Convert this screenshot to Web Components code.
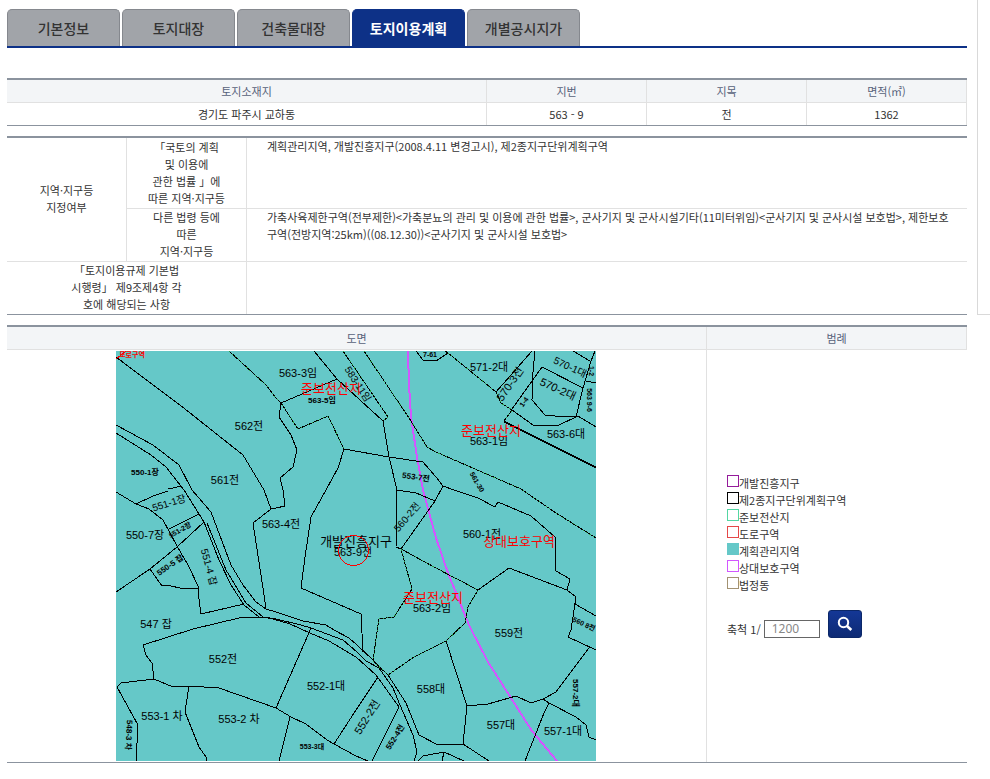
<!DOCTYPE html>
<html lang="ko">
<head>
<meta charset="utf-8">
<title>토지이용계획</title>
<style>
  body {
    margin: 0;
    background: #fff;
    color: #333;
    font: 11px/17px "Noto Sans CJK KR", sans-serif;
  }
</style>
</head>
<body>
<land-page>
  <tab-bar slot="tabs">
    <tab-link href="#basic">기본정보</tab-link>
    <tab-link href="#land">토지대장</tab-link>
    <tab-link href="#building">건축물대장</tab-link>
    <tab-link href="#plan" active>토지이용계획</tab-link>
    <tab-link href="#price">개별공시지가</tab-link>
  </tab-bar>
  <land-summary></land-summary>
  <land-plan></land-plan>
  <map-sheet>
    <cadastral-map slot="map"></cadastral-map>
    <legend-item style="--line:#951b9b">개발진흥지구</legend-item>
    <legend-item style="--line:#000">제2종지구단위계획구역</legend-item>
    <legend-item style="--line:#53d6a3">준보전산지</legend-item>
    <legend-item style="--line:#e54848">도로구역</legend-item>
    <legend-item style="--line:#65c8c8; --fill:#65c8c8">계획관리지역</legend-item>
    <legend-item style="--line:#d257ff">상대보호구역</legend-item>
    <legend-item style="--line:#a39272">법정동</legend-item>
    <scale-form slot="scale"></scale-form>
  </map-sheet>
</land-page>

<script>
const tableCss = `
  :host { display: block; }
  table {
    width: 100%;
    table-layout: fixed;
    border-collapse: separate;
    border-spacing: 0;
    border-top: 2px solid #8b939e;
    border-bottom: 1px solid #8b939e;
  }
  th, td {
    padding: 0;
    font-weight: 400;
    text-align: center;
    vertical-align: middle;
    border-right: 1px solid #e1e1e1;
    border-bottom: 1px solid #e1e1e1;
  }
  thead th {
    box-sizing: border-box;
    height: 23px;
    background: #f3f5f7;
    color: #57627a;
  }
  tbody tr:last-child > * { border-bottom: 0; }
`;

function define(name, html, setup) {
  const template = document.createElement('template');
  template.innerHTML = html;
  customElements.define(name, class extends HTMLElement {
    constructor() {
      super();
      this.attachShadow({ mode: 'open' }).append(template.content.cloneNode(true));
    }
    connectedCallback() {
      if (setup) setup(this, this.shadowRoot);
    }
  });
}

define('land-page', `
  <style>
    :host {
      display: grid;
      grid-template-columns: minmax(0, 1fr) 13px;
      gap: 10px;
      padding-left: 7px;
    }
    main { padding: 9px 0 16px; }
    .body { display: flex; flex-direction: column; gap: 10px; margin-top: 30px; }
    aside {
      box-sizing: border-box;
      height: 315px;
      border: solid #d9d9d9;
      border-width: 0 0 1px 1px;
    }
  </style>
  <main>
    <slot name="tabs"></slot>
    <div class="body"><slot></slot></div>
  </main>
  <aside></aside>
`);

define('tab-bar', `
  <style>
    :host { display: block; border-bottom: 2px solid #0d3187; }
    nav { display: flex; gap: 2px; }
  </style>
  <nav><slot></slot></nav>
`);

define('tab-link', `
  <style>
    :host { display: block; width: 113px; }
    a {
      display: block;
      box-sizing: border-box;
      height: 37px;
      border: 1px solid #85888e;
      border-bottom: 0;
      border-radius: 5px 5px 0 0;
      background: #a1a4a9;
      color: #333;
      font-size: 14px;
      font-weight: 500;
      line-height: 36px;
      text-align: center;
      text-decoration: none;
      white-space: nowrap;
    }
    :host([active]) a { background: #0d3187; border-color: #0d3187; color: #fff; font-weight: 700; }
  </style>
  <a><slot></slot></a>
`, (host, root) => root.querySelector('a').setAttribute('href', host.getAttribute('href')));

define('land-summary', `
  <style>${tableCss}
    col.narrow { width: 160px; }
    td { height: 22px; }
  </style>
  <table>
    <colgroup><col><col class="narrow"><col class="narrow"><col class="narrow"></colgroup>
    <thead><tr><th scope="col">토지소재지</th><th scope="col">지번</th><th scope="col">지목</th><th scope="col">면적(㎡)</th></tr></thead>
    <tbody><tr><td>경기도 파주시 교하동</td><td>563 - 9</td><td>전</td><td>1362</td></tr></tbody>
  </table>
`);

define('land-plan', `
  <style>${tableCss}
    col.head { width: 120px; }
    th { padding-bottom: 1px; }
    td { padding-left: 20px; text-align: left; vertical-align: top; border-right: 0; }
    .tall { height: 69px; }
  </style>
  <table>
    <colgroup><col class="head"><col class="head"><col></colgroup>
    <tbody>
      <tr>
        <th scope="rowgroup" rowspan="2">지역·지구등<br>지정여부</th>
        <th scope="row" class="tall">「국토의 계획<br>및 이용에<br>관한 법률 」에<br>따른 지역·지구등</th>
        <td>계획관리지역, 개발진흥지구(2008.4.11 변경고시), 제2종지구단위계획구역</td>
      </tr>
      <tr>
        <th scope="row">다른 법령 등에<br>따른<br>지역·지구등</th>
        <td>가축사육제한구역(전부제한)&lt;가축분뇨의 관리 및 이용에 관한 법률&gt;, 군사기지 및 군사시설기타(11미터위임)&lt;군사기지 및 군사시설 보호법&gt;, 제한보호<br>구역(전방지역:25km)((08.12.30))&lt;군사기지 및 군사시설 보호법&gt;</td>
      </tr>
      <tr>
        <th scope="row" colspan="2">「토지이용규제 기본법<br>시행령」 제9조제4항 각<br>호에 해당되는 사항</th>
        <td></td>
      </tr>
    </tbody>
  </table>
`);

define('map-sheet', `
  <style>${tableCss}
    col.side { width: 260px; }
    tbody td { padding: 1px 0; border-right: 0; }
    tbody td.map { padding-right: 1px; border-right: 1px solid #e1e1e1; }
    tbody td.side { padding-left: 20px; text-align: left; }
    .items { display: flex; flex-direction: column; margin-bottom: 16px; }
  </style>
  <table>
    <colgroup><col><col class="side"></colgroup>
    <thead><tr><th scope="col">도면</th><th scope="col">범례</th></tr></thead>
    <tbody><tr>
      <td class="map"><slot name="map"></slot></td>
      <td class="side"><div class="items"><slot></slot></div><slot name="scale"></slot></td>
    </tr></tbody>
  </table>
`);

define('legend-item', `
  <style>
    :host { display: flex; align-items: flex-start; height: 17px; line-height: 17px; }
    i {
      box-sizing: border-box;
      width: 12px;
      height: 12px;
      border: 1px solid var(--line);
      background: var(--fill, transparent);
    }
  </style>
  <i></i><span><slot></slot></span>
`);

define('scale-form', `
  <style>
    :host { display: block; }
    form { display: flex; align-items: flex-end; }
    label { margin-right: 3px; line-height: 17px; }
    input {
      box-sizing: border-box;
      width: 56px;
      height: 18px;
      padding: 0 7px;
      border: 1px solid #666;
      border-radius: 0;
      background: #fff;
      color: #888;
      font: 12px/16px "Noto Sans", sans-serif;
    }
    button {
      display: flex;
      align-items: center;
      justify-content: center;
      width: 34px;
      height: 28px;
      margin-left: 8px;
      padding: 0;
      border: 1px solid #0b2768;
      border-radius: 3px;
      background: linear-gradient(#143796, #0d2a74);
    }
  </style>
  <form>
    <label for="scale">축척 1/</label>
    <input id="scale" type="text" value="1200">
    <button type="button" aria-label="검색">
      <svg width="16" height="16" viewBox="0 0 16 16" fill="none" stroke="#fff">
        <circle cx="6.5" cy="6.5" r="4.7" stroke-width="2"/>
        <path d="M10 10l4.3 4" stroke-width="2.6"/>
      </svg>
    </button>
  </form>
`);

/* Parcel outlines, in sheet coordinates. */
const parcels = [
  '116,357 120,360 180,405 243,455 255,475 264,490 271,509 276,508 285,506 283,490 280,478 293,467 297,450 291,435 279,417 281,403',
  '271,509 253,523 266,608',
  '116,425 153,445 179,465 192,490 211,512 231,565 243,585 256,602 266,609 276,612 303,621 326,625 334,630 349,638 357,645 373,660 388,675 406,703 419,735 438,745 463,744 489,761',
  '116,433 151,455 166,467 184,490 204,522 219,560 231,585 244,605 259,617 276,619 301,625 311,628 343,640 357,652 366,661 379,668 393,688 400,705 413,735 417,752 414,761',
  '207,523 226,570 246,603 263,617',
  '266,617 290,624 310,633 329,641 356,657 376,675 399,707',
  '168,489 182,486',
  '116,492 136,504 149,509 163,520 177,546 188,565 199,588 198,592 201,614 244,604',
  '136,504 153,496 168,491',
  '169,529 199,514',
  '116,592 150,569 177,547 204,522',
  '150,569 162,586 167,585 184,589 199,588',
  '266,617 239,618 193,629 143,645 146,655 152,663 154,679 121,683 117,687 138,725 136,761',
  '154,679 173,687 189,686 219,688 276,708 291,717 306,724 327,740 334,744 356,756 368,761',
  '189,686 185,712 199,747 206,757 206,761',
  '290,717 279,761',
  '311,628 276,708',
  '334,744 356,710 378,677',
  '372,761 399,707',
  '363,652 361,614 301,588 305,557 311,517 326,490 338,468 344,449',
  '396,547 397,490 389,457 383,421 337,379 314,351',
  '397,490 416,493 435,501 401,549',
  '396,547 401,549',
  '344,449 389,457 423,462 436,477 443,486 454,490 478,498 495,507 498,502 531,516 555,537 556,571 570,579 567,590',
  '443,486 435,501',
  '281,403 337,379',
  '416,351 423,360 436,361 448,353 445,351',
  '496,392 532,351',
  '535,351 533,372 532,400 545,415 564,417 578,416',
  '501,403 512,410 533,425 559,425 578,416 596,427',
  '504,421 596,467',
  '504,422 596,468',
  '512,409 542,367 583,388',
  '573,351 590,361',
  '595,351 591,361 583,388 576,417',
  '586,381 596,383',
  '478,590 509,568 567,590 576,597 571,630 568,637 596,650',
  '575,604 596,616',
  '446,641 467,706 463,744',
  '467,706 488,704 516,696 531,703 543,699 556,692 589,648',
  '543,699 549,703 576,717 586,725 589,737 596,740',
  '549,703 544,713 525,761',
  '418,761 423,756 444,752 464,761',
  '444,752 442,761'
];
const forestEdges = [
  '229,351 266,385 276,398 281,403 298,429 328,416 344,449',
  '343,351 388,417 383,421',
  '364,351 409,418 427,447 436,452 521,489 556,513 596,538',
  '448,353 496,392 501,403 512,410 504,421',
  '401,549 436,568 478,590 468,607 465,623 446,641 414,657 388,675 373,661 378,625 379,619 394,617 412,589 401,549'
];
/* [centre x, centre y, text, class, rotation] */
const labels = [
  [298,373,'563-3임'], [322,400,'563-5임','s'], [358,384,'583-11임','m',57],
  [249,426,'562전'], [225,480,'561전'], [145,472,'550-1장','s'], [416,477,'553-7전','s',8],
  [489,367,'571-2대'], [510,384,'570-3전','',-55], [570,367,'570-1대','m',25],
  [558,389,'570-2대','',25], [524,402,'1-4','t',-55], [589,400,'563 9-6','t',90],
  [591,371,'1-2','t',90], [430,355,'7-61','t'],
  [489,441,'563-1임'], [566,434,'563-6대'], [477,482,'561-30','t',60],
  [169,503,'551-1장','m',-17], [145,535,'550-7장'], [180,530,'551-2장','t',-30],
  [170,565,'550-5 잡','s',-35], [209,567,'551-4 잡','m',75], [156,624,'547 잡'],
  [281,524,'563-4전'], [353,552,'563-9전'], [407,517,'560-2전','m',-50],
  [432,608,'563-2임'], [482,534,'560-1전'], [584,624,'560 8전','t',25],
  [509,633,'559전'], [223,659,'552전'], [326,686,'552-1대'], [162,716,'553-1 차'],
  [239,719,'553-2 차'], [312,747,'553-3대','t'], [129,735,'548-3 차','s',93],
  [431,689,'558대'], [501,725,'557대'], [563,731,'557-1대'], [576,693,'557-2대','s',90],
  [367,717,'552-2전','',-58], [395,737,'552-4전','s',-58],
  [356,541,'개발진흥지구','zone'], [331,388,'준보전산지','zone red'],
  [491,430,'준보전산지','zone red'], [433,597,'준보전산지','zone red'],
  [519,541,'상대보호구역','zone red'], [132,355,'도로구역','t red']
];
const lines = (list, cls) => list.map(p => `<polyline class="${cls}" points="${p}"/>`).join('');

define('cadastral-map', `
  <style>
    :host { display: block; }
    svg { display: block; margin: 0 auto; max-width: 100%; background: #65c8c8; }
    polyline, circle { fill: none; stroke: #000; stroke-width: 1; shape-rendering: crispEdges; }
    .green { stroke: #2c9f45; stroke-dasharray: 1 3; }
    .road { stroke: #d257ff; stroke-width: 2; }
    circle { stroke: #f00; }
    text {
      font: 11px "Liberation Sans", "Noto Sans CJK KR", sans-serif;
      text-anchor: middle;
      fill: #000;
    }
    .m { font-size: 10px; }
    .s { font-size: 8px; font-weight: 700; }
    .t { font-size: 7px; font-weight: 700; }
    .zone { font: 400 13px "Noto Sans CJK KR", sans-serif; }
    .red { fill: #f00; }
    polyline.red { fill: none; stroke: #f00; }
  </style>
  <svg width="480" height="410" viewBox="116 351 480 410" role="img" aria-label="지적도">
    ${lines(['408,351 409,385 411,417 417,457 423,490 436,538 448,573 469,625 488,662 511,698 532,731 557,761'], 'road')}
    ${lines(parcels, '')}${lines(forestEdges, '')}${lines(forestEdges, 'green')}
    ${lines(['116,359 126,351'], 'red')}
    ${labels.map(([x, y, t, c = '', r = 0]) => `<text class="${c}" dy="0.35em" transform="translate(${x} ${y}) rotate(${r})">${t}</text>`).join('')}
    <circle cx="353.5" cy="550.5" r="15"/>
  </svg>
`);
</script>
</body>
</html>
